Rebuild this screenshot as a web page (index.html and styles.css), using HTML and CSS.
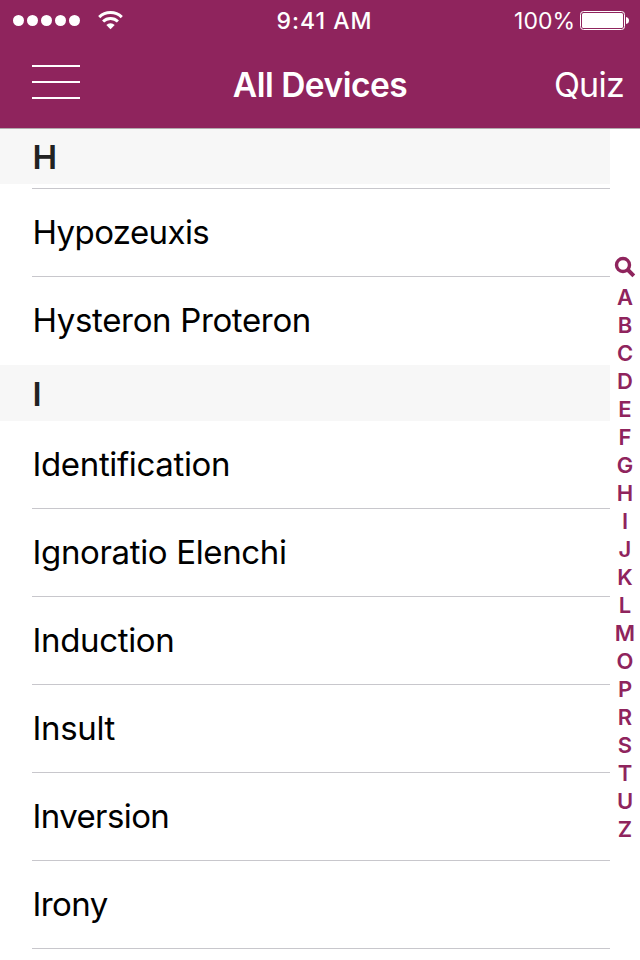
FILE: index.html
```html
<!DOCTYPE html>
<html lang="en">
<head>
<meta charset="utf-8">
<title>All Devices</title>
<link rel="stylesheet" href="styles.css">
</head>
<body>
<header class="header">
  <div class="status">
    <svg class="signal" width="124" height="40" viewBox="0 0 124 40" fill="#fff"><circle cx="18.5" cy="20.5" r="5.5"/><circle cx="32.5" cy="20.5" r="5.5"/><circle cx="46.5" cy="20.5" r="5.5"/><circle cx="60.5" cy="20.5" r="5.5"/><circle cx="74.5" cy="20.5" r="5.5"/><g fill="none" stroke="#fff" stroke-width="3"><path d="M99.2 17.100a16.200 16.200 0 0 1 22.600 0"/><path d="M103.100 21.500a10.600 10.600 0 0 1 14.800 0"/></g><path d="M106.300 25a6.200 6.200 0 0 1 8.400 0l-4.200 4.200z"/></svg>
    <span class="time">9:41 AM</span>
    <div class="battery"><span class="percent">100%</span><svg width="50" height="20" viewBox="0 0 50 20"><rect x=".5" y=".5" width="44" height="18" rx="3" fill="none" stroke="#fff"/><rect x="2" y="2" width="41" height="15" rx="1.500" fill="#fff"/><path d="M46 6q3 .5 3 3.500t-3 3.500z" fill="#fff"/></svg></div>
  </div>
  <nav class="nav"><button class="menu" aria-label="Menu"><i></i><i></i><i></i></button><h1>All Devices</h1><a class="quiz">Quiz</a></nav>
</header>
<main class="content">
  <div class="list">
    <h2 class="first">H</h2>
    <ul class="group lead"><li class="tight">Hypozeuxis</li><li>Hysteron Proteron</li></ul>
    <h2>I</h2>
    <ul class="group"><li>Identification</li><li>Ignoratio Elenchi</li><li>Induction</li><li>Insult</li><li class="tight">Inversion</li><li class="tight">Irony</li></ul>
  </div>
  <aside class="index"><svg width="22" height="22" viewBox="0 0 22 22" fill="none" stroke="#8f245d"><circle cx="9" cy="9" r="6.500" stroke-width="3.400"/><path d="M14 14l5.800 5.800" stroke-width="4"/></svg><b>A</b><b>B</b><b>C</b><b>D</b><b>E</b><b>F</b><b>G</b><b>H</b><b>I</b><b>J</b><b>K</b><b>L</b><b>M</b><b>O</b><b>P</b><b>R</b><b>S</b><b>T</b><b>U</b><b>Z</b></aside>
</main>
</body>
</html>
```
FILE: styles.css
```css
* { box-sizing: border-box; }
body { margin: 0; width: 640px; height: 960px; overflow: hidden; background: #fff; color: #000; font-family: Inter, sans-serif; }
.header { height: 129px; background: #8f245d; color: #fff; border-bottom: 1px solid #b2abae; }
.status { height: 40px; display: grid; grid-template-columns: 1fr auto 1fr; align-items: center; }
.signal { display: block; }
.time { font-size: 23px; font-weight: 500; letter-spacing: 1px; padding: 2px 0 0 9px; }
.battery { display: flex; align-items: center; justify-content: flex-end; gap: 5px; padding: 1px 10px 0 0; }
.percent { font-size: 23px; padding-top: 1px; }
.nav { height: 84px; display: grid; grid-template-columns: 1fr auto 1fr; align-items: center; padding: 0 16px; }
.menu { width: 48px; margin-left: 16px; padding: 0; border: 0; background: none; display: grid; gap: 14px; }
.menu i { height: 2px; background: #fff; }
h1 { margin: 5px 0 0; font-size: 33.5px; font-weight: 600; letter-spacing: -.5px; }
.quiz { font-size: 34px; text-align: right; letter-spacing: -.75px; padding-top: 5px; }
.content { display: flex; height: 831px; }
.list { width: 610px; }
h2 { margin: 0; height: 56px; padding-left: 32.5px; line-height: 58px; background: #f7f7f7; font-size: 33px; font-weight: 600; color: #222; }
.first { height: 55px; line-height: 57px; }
ul { list-style: none; margin: 0; padding: 0 0 0 32px; }
li { height: 88px; line-height: 86px; padding-left: .5px; font-size: 33px; letter-spacing: -.35px; border-bottom: 1px solid #c8c7cc; }
.tight { letter-spacing: -.6px; }
.lead { margin-top: 4px; }
.lead li:first-child { height: 89px; border-top: 1px solid #c8c7cc; }
.lead li:last-child { border-color: transparent; }
.index { width: 30px; padding-top: 127px; display: flex; flex-direction: column; align-items: center; color: #8f245d; }
.index svg { margin-bottom: 5px; }
.index b { height: 28px; line-height: 28px; font-size: 22px; font-weight: 600; }
```
